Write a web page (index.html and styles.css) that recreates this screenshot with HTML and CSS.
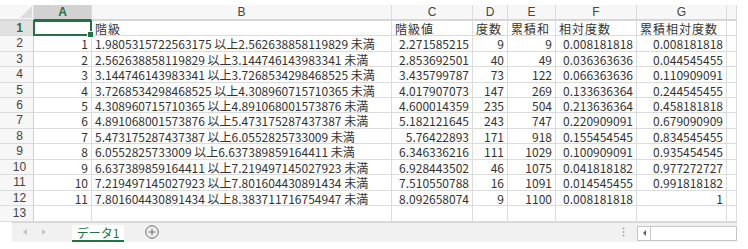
FILE: index.html
```html
<!DOCTYPE html>
<html lang="ja">
<head>
<meta charset="utf-8">
<title>データ1</title>
<link rel="stylesheet" href="styles.css">
</head>
<body>
<div class="sheet">
  <div class="grid">
    <div class="corner"><svg class="tri" width="12" height="12" viewBox="0 0 12 12"><polygon points="12,0 12,12 0,12" fill="#dcdcdc"/></svg></div>
    <div class="ch sel">A</div><div class="ch">B</div><div class="ch">C</div><div class="ch">D</div><div class="ch">E</div><div class="ch">F</div><div class="ch">G</div><div class="ch"></div>

    <div class="rh rsel">1</div><div class="c a1"></div><div class="c hd">階級</div><div class="c hd">階級値</div><div class="c hd">度数</div><div class="c hd">累積和</div><div class="c hd">相対度数</div><div class="c hd">累積相対度数</div><div class="c"></div>

    <div class="rh">2</div><div class="c n">1</div><div class="c">1.9805315722563175 以上2.562638858119829 未満</div><div class="c n">2.271585215</div><div class="c n">9</div><div class="c n">9</div><div class="c n">0.008181818</div><div class="c n">0.008181818</div><div class="c"></div>
    <div class="rh">3</div><div class="c n">2</div><div class="c">2.562638858119829 以上3.144746143983341 未満</div><div class="c n">2.853692501</div><div class="c n">40</div><div class="c n">49</div><div class="c n">0.036363636</div><div class="c n">0.044545455</div><div class="c"></div>
    <div class="rh">4</div><div class="c n">3</div><div class="c">3.144746143983341 以上3.7268534298468525 未満</div><div class="c n">3.435799787</div><div class="c n">73</div><div class="c n">122</div><div class="c n">0.066363636</div><div class="c n">0.110909091</div><div class="c"></div>
    <div class="rh">5</div><div class="c n">4</div><div class="c">3.7268534298468525 以上4.308960715710365 未満</div><div class="c n">4.017907073</div><div class="c n">147</div><div class="c n">269</div><div class="c n">0.133636364</div><div class="c n">0.244545455</div><div class="c"></div>
    <div class="rh">6</div><div class="c n">5</div><div class="c">4.308960715710365 以上4.891068001573876 未満</div><div class="c n">4.600014359</div><div class="c n">235</div><div class="c n">504</div><div class="c n">0.213636364</div><div class="c n">0.458181818</div><div class="c"></div>
    <div class="rh">7</div><div class="c n">6</div><div class="c">4.891068001573876 以上5.473175287437387 未満</div><div class="c n">5.182121645</div><div class="c n">243</div><div class="c n">747</div><div class="c n">0.220909091</div><div class="c n">0.679090909</div><div class="c"></div>
    <div class="rh">8</div><div class="c n">7</div><div class="c">5.473175287437387 以上6.0552825733009 未満</div><div class="c n">5.76422893</div><div class="c n">171</div><div class="c n">918</div><div class="c n">0.155454545</div><div class="c n">0.834545455</div><div class="c"></div>
    <div class="rh">9</div><div class="c n">8</div><div class="c">6.0552825733009 以上6.637389859164411 未満</div><div class="c n">6.346336216</div><div class="c n">111</div><div class="c n">1029</div><div class="c n">0.100909091</div><div class="c n">0.935454545</div><div class="c"></div>
    <div class="rh">10</div><div class="c n">9</div><div class="c">6.637389859164411 以上7.219497145027923 未満</div><div class="c n">6.928443502</div><div class="c n">46</div><div class="c n">1075</div><div class="c n">0.041818182</div><div class="c n">0.977272727</div><div class="c"></div>
    <div class="rh">11</div><div class="c n">10</div><div class="c">7.219497145027923 以上7.801604430891434 未満</div><div class="c n">7.510550788</div><div class="c n">16</div><div class="c n">1091</div><div class="c n">0.014545455</div><div class="c n">0.991818182</div><div class="c"></div>
    <div class="rh">12</div><div class="c n">11</div><div class="c">7.801604430891434 以上8.383711716754947 未満</div><div class="c n">8.092658074</div><div class="c n">9</div><div class="c n">1100</div><div class="c n">0.008181818</div><div class="c n">1</div><div class="c"></div>
    <div class="rh">13</div><div class="c"></div><div class="c"></div><div class="c"></div><div class="c"></div><div class="c"></div><div class="c"></div><div class="c"></div><div class="c"></div>
  </div>

  <div class="tabbar">
    <div class="nav">
      <svg width="4" height="6" viewBox="0 0 4 6"><polygon points="4,0 4,6 0,3" fill="#c4c4c4"/></svg>
      <svg width="4" height="6" viewBox="0 0 4 6"><polygon points="0,0 0,6 4,3" fill="#c4c4c4"/></svg>
    </div>
    <div class="tab">データ1</div>
    <div class="add"><svg width="14" height="14" viewBox="0 0 14 14"><circle cx="7" cy="7" r="6.2" fill="none" stroke="#6a6a6a" stroke-width="1"/><path d="M7 3.6v6.8M3.6 7h6.8" stroke="#6a6a6a" stroke-width="1"/></svg></div>
    <div class="spacer"></div>
    <div class="dots"><svg width="3" height="10" viewBox="0 0 3 10"><circle cx="1.5" cy="1.5" r="0.9" fill="#a8a8a8"/><circle cx="1.5" cy="5" r="0.9" fill="#a8a8a8"/><circle cx="1.5" cy="8.5" r="0.9" fill="#a8a8a8"/></svg></div>
    <div class="hscroll">
      <div class="sbtn"><svg width="3" height="6" viewBox="0 0 3 6"><polygon points="3,0 3,6 0,3" fill="#606060"/></svg></div>
      <div class="track"></div>
    </div>
  </div>
</div>
</body>
</html>
```
FILE: styles.css
```css
body {
  margin: 0;
  background: #fff;
  font-family: "Noto Sans CJK JP", "Liberation Sans", sans-serif;
}

.sheet {
  width: 737px;
  padding-top: 5px;
}

.grid {
  display: grid;
  grid-template-columns: 34px 58px 300px 81px 35px 48px 81px 90px 10px;
  grid-template-rows: 15.7px repeat(13, 15.46px);
}

.grid > div {
  box-sizing: border-box;
  border-right: 1px solid #dcdcdc;
  border-bottom: 1px solid #dcdcdc;
  white-space: nowrap;
  overflow: hidden;
}

.corner {
  background: #f7f7f7;
  border-bottom: 2px solid #d6d6d6 !important;
  display: flex;
  align-items: flex-end;
  justify-content: flex-end;
  padding: 0 1px 1px 0;
}

.tri {
  display: block;
}

.ch {
  background: #f7f7f7;
  border-bottom: 2px solid #d6d6d6 !important;
  font-family: "Liberation Sans", sans-serif;
  font-size: 12px;
  line-height: 14px;
  color: #444;
  text-align: center;
}

.ch.sel {
  background: #d2d2d2;
  color: #217346;
  font-weight: bold;
  border-bottom: 2px solid #217346 !important;
}

.rh {
  background: #f7f7f7;
  border-right: 1px solid #cfcfcf !important;
  font-family: "Liberation Sans", sans-serif;
  font-size: 12px;
  line-height: 15px;
  color: #444;
  text-align: center;
  padding-left: 6px;
}

.rh.rsel {
  background: #e1e1e1;
  color: #217346;
  font-weight: bold;
}

.c {
  font-size: 12px;
  line-height: 15px;
  color: #333;
  padding: 0 3px;
}

.c.hd {
  letter-spacing: 1px;
}

.c.n {
  text-align: right;
}

.a1 {
  position: relative;
  overflow: visible !important;
}

.a1::after {
  content: "";
  position: absolute;
  left: -1px;
  top: -1px;
  right: -1px;
  bottom: -1px;
  border: 2px solid #217346;
}

.a1::before {
  content: "";
  position: absolute;
  right: -3px;
  bottom: -3px;
  width: 5px;
  height: 5px;
  background: #217346;
  border: 1px solid #fff;
  z-index: 2;
}

.tabbar {
  margin-left: 12px;
  height: 19px;
  background: #f1f1f1;
  border-top: 1px solid #d6d6d6;
  display: flex;
  align-items: stretch;
}

.nav {
  width: 60px;
  display: flex;
  align-items: center;
  gap: 15px;
  padding-left: 11px;
  box-sizing: border-box;
}

.nav svg {
  display: block;
}

.tab {
  width: 52px;
  margin-top: 2px;
  background: #fff;
  border-bottom: 2px solid #217346;
  color: #217346;
  font-size: 12px;
  line-height: 15px;
  text-align: center;
}

.add {
  margin-left: 21px;
  display: flex;
  align-items: center;
}

.add svg {
  display: block;
}

.spacer {
  flex: 1;
}

.dots {
  display: flex;
  align-items: center;
  margin-right: 12px;
}

.dots svg {
  display: block;
}

.hscroll {
  width: 100px;
  margin: 3px 0 1px;
  display: flex;
  border: 1px solid #c6c6c6;
  background: #fff;
  box-sizing: border-box;
}

.sbtn {
  width: 12px;
  border-right: 1px solid #c6c6c6;
  display: flex;
  align-items: center;
  justify-content: center;
}

.sbtn svg {
  display: block;
}

.track {
  flex: 1;
}
```
